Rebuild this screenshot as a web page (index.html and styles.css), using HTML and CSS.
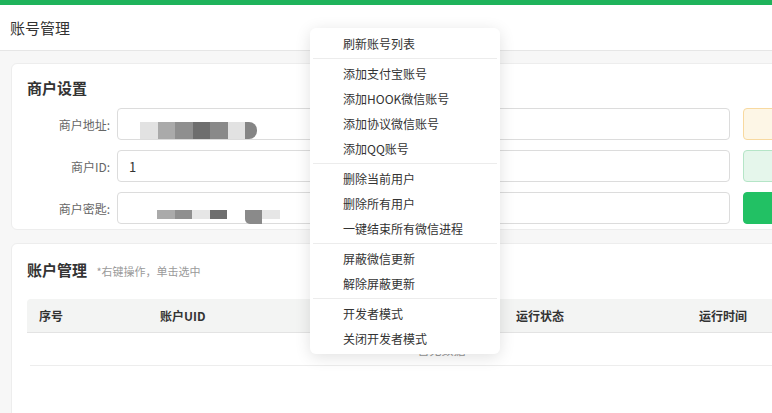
FILE: index.html
```html
<!DOCTYPE html>
<html lang="zh-CN">

<head>
    <meta charset="UTF-8">
    <meta name="viewport" content="width=device-width, initial-scale=1.0">
    <title>账号管理</title>
    <link rel="stylesheet" href="styles.css">
</head>

<body>
    <div class="topbar"></div>
    <div class="header">账号管理</div>

    <div class="content">
        <div class="card card-merchant">
            <div class="card-title">商户设置</div>

            <div class="form-row">
                <label class="form-label">商户地址:</label>
                <div class="field">
                    <span class="mosaic mosaic-1">
                        <i class="m-a"></i><i class="m-b"></i><i class="m-c"></i><i class="m-d"></i><i class="m-e"></i><i class="m-a"></i><i class="m-end"></i>
                    </span>
                </div>
                <button class="btn btn-warning">测试</button>
            </div>
            <div class="form-row">
                <label class="form-label">商户ID:</label>
                <div class="field">1</div>
                <button class="btn btn-success-plain">复制</button>
            </div>
            <div class="form-row">
                <label class="form-label">商户密匙:</label>
                <div class="field">
                    <span class="mosaic mosaic-2">
                        <i class="m-b"></i><i class="m-c"></i><i class="m-f"></i><i class="m-d"></i><i class="m-gap"></i><i class="m-end2"></i><i class="m-f"></i>
                    </span>
                </div>
                <button class="btn btn-success">保存</button>
            </div>
        </div>

        <div class="card card-accounts">
            <div class="card-title">账户管理 <span class="hint">*右键操作，单击选中</span></div>

            <div class="table">
                <div class="table-head">
                    <div class="th">序号</div>
                    <div class="th">账户UID</div>
                    <div class="th"></div>
                    <div class="th">运行状态</div>
                    <div class="th">运行时间</div>
                </div>
                <div class="table-empty">暂无数据</div>
            </div>
        </div>
    </div>

    <ul class="context-menu">
        <li>刷新账号列表</li>
        <li class="divider"></li>
        <li>添加支付宝账号</li>
        <li>添加HOOK微信账号</li>
        <li>添加协议微信账号</li>
        <li>添加QQ账号</li>
        <li class="divider"></li>
        <li>删除当前用户</li>
        <li>删除所有用户</li>
        <li>一键结束所有微信进程</li>
        <li class="divider"></li>
        <li>屏蔽微信更新</li>
        <li>解除屏蔽更新</li>
        <li class="divider"></li>
        <li>开发者模式</li>
        <li>关闭开发者模式</li>
    </ul>
</body>

</html>
```

FILE: styles.css
```css
* {
    margin: 0;
    padding: 0;
    box-sizing: border-box;
}

body {
    font-family: "Noto Sans CJK SC", "Noto Sans", "Liberation Sans", sans-serif;
    color: #333;
    background: #f7f7f7;
    overflow: hidden;
    width: 880px;
}

.topbar {
    height: 5px;
    background: #1fb35b;
}

.header {
    height: 46px;
    padding-left: 10px;
    display: flex;
    align-items: center;
    font-size: 15px;
    background: #fff;
    border-bottom: 1px solid #e6e6e6;
}

.content {
    padding: 12px 0 0 11px;
}

.card {
    background: #fff;
    border: 1px solid #ededed;
    border-radius: 6px;
    width: 858px;
    padding: 0 15px;
}

.card-merchant {
    padding-top: 14px;
    padding-bottom: 5px;
}

.card-accounts {
    margin-top: 13px;
    padding-top: 16px;
    height: 200px;
}

.card-title {
    font-size: 15px;
    font-weight: bold;
    line-height: 20px;
    margin-bottom: 10px;
}

.hint {
    font-size: 11px;
    font-weight: normal;
    color: #9a9a9a;
    margin-left: 6px;
}

.form-row {
    display: flex;
    align-items: center;
    margin-bottom: 10px;
}

.form-row:last-child {
    margin-bottom: 0;
}

.form-label {
    width: 83px;
    margin-right: 7px;
    text-align: right;
    font-size: 12px;
    color: #666;
}

.field {
    width: 613px;
    height: 32px;
    border: 1px solid #dcdcdc;
    border-radius: 4px;
    padding-left: 11px;
    font-size: 13px;
    display: flex;
    align-items: center;
    position: relative;
}

.btn {
    width: 100px;
    height: 32px;
    margin-left: 13px;
    border-radius: 4px;
    font-size: 12px;
    font-family: inherit;
    border: 1px solid;
}

.btn-warning {
    background: #fdf6e6;
    border-color: #f8d9a0;
    color: #e6a23c;
}

.btn-success-plain {
    background: #e5f6eb;
    border-color: #b5e5c7;
    color: #22c164;
}

.btn-success {
    background: #22c164;
    border-color: #22c164;
    color: #fff;
}

/* redacted value */
.mosaic {
    display: flex;
    position: absolute;
}

.mosaic i {
    display: block;
    width: 17.5px;
}

.mosaic-1 {
    left: 22px;
    top: 13px;
    height: 17px;
}

.mosaic-2 {
    left: 39px;
    top: 17px;
    height: 9px;
}

.m-a { background: #e2e2e2; }
.m-b { background: #aaaaaa; }
.m-c { background: #8f8f8f; }
.m-d { background: #6e6e6e; }
.m-e { background: #898989; }
.m-f { background: #e6e6e6; }
.m-gap { background: transparent; }

.mosaic .m-end {
    width: 12px;
    background: #858585;
    border-radius: 0 8px 8px 0;
}

.mosaic .m-end2 {
    background: #8a8a8a;
    height: 14px;
    border-radius: 0 0 0 5px;
}

.table {
    margin-top: 18px;
}

.table-head {
    display: grid;
    grid-template-columns: 121px 178px 178px 183px 1fr;
    height: 34px;
    background: #f3f4f3;
    border-bottom: 1px solid #e3e3e3;
    border-radius: 4px 4px 0 0;
}

.th {
    padding-left: 12px;
    font-size: 12px;
    font-weight: bold;
    line-height: 34px;
}

.table-empty {
    height: 33px;
    line-height: 33px;
    text-align: center;
    font-size: 12px;
    color: #999;
    border-bottom: 1px solid #ededed;
    margin-left: 3px;
}

.context-menu {
    position: absolute;
    left: 310px;
    top: 28px;
    width: 190px;
    list-style: none;
    background: #fff;
    border-radius: 6px;
    padding: 3px 0;
    box-shadow: 0 3px 16px rgba(0, 0, 0, 0.12);
}

.context-menu li {
    height: 25px;
    line-height: 25px;
    padding-left: 33px;
    font-size: 12px;
    color: #333;
}

.context-menu .divider {
    height: 1px;
    margin: 2px 3px;
    padding: 0;
    background: #ececec;
}
```
